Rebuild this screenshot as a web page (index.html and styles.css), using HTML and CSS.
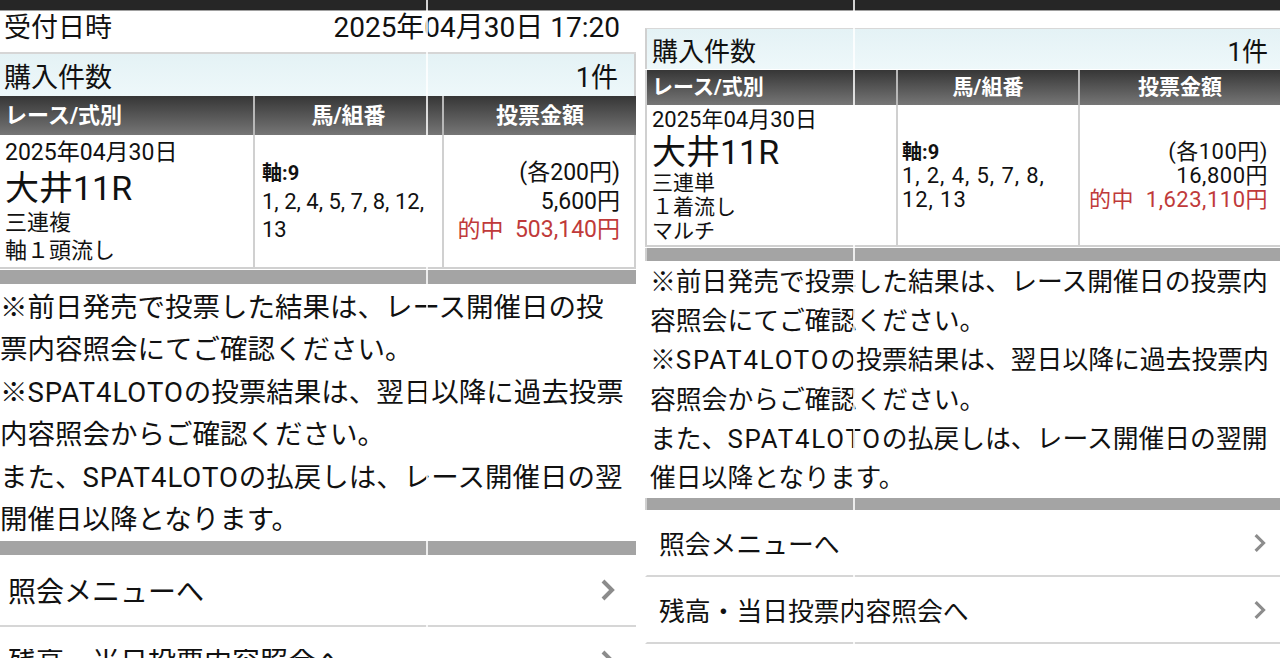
FILE: index.html
```html
<!DOCTYPE html>
<html lang="ja">
<head>
<meta charset="utf-8">
<title>投票内容</title>
<link rel="stylesheet" href="styles.css">
</head>
<body>
<div class="page">
  <div class="topbar"></div>
  <div class="collage">
    <section class="panel left">
      <div class="info"><span>受付日時</span><span>2025年04月30日 17:20</span></div>
      <div class="count"><span>購入件数</span><span>1件</span></div>
      <div class="thead">
        <div class="th c1">レース/式別</div>
        <div class="th c2">馬/組番</div>
        <div class="th c3">投票金額</div>
      </div>
      <div class="tbody">
        <div class="td race">
          <div class="date">2025年04月30日</div>
          <div class="venue">大井11R</div>
          <div class="small">三連複</div>
          <div class="small">軸１頭流し</div>
        </div>
        <div class="td combo">
          <div class="axis">軸:9</div>
          <div>1, 2, 4, 5, 7, 8, 12,</div>
          <div>13</div>
        </div>
        <div class="td amount">
          <div>(各200円)</div>
          <div>5,600円</div>
          <div class="hit">的中&nbsp; 503,140円</div>
        </div>
      </div>
      <div class="graybar"></div>
      <p class="notes">※前日発売で投票した結果は、レース開催日の投<br>票内容照会にてご確認ください。<br>※<span class="lat">SPAT4LOTO</span>の投票結果は、翌日以降に過去投票<br>内容照会からご確認ください。<br>また、<span class="lat">SPAT4LOTO</span>の払戻しは、レース開催日の翌<br>開催日以降となります。</p>
      <div class="graybar gb2"></div>
      <div class="menu"><span>照会メニューへ</span><svg class="chev" viewBox="0 0 16 24" width="16" height="24"><polyline points="3,3 12,12 3,21" fill="none" stroke="#8c8c8c" stroke-width="4"/></svg></div>
      <div class="menu cut"><div class="clip"><span>残高・当日投票内容照会へ</span><svg class="chev" viewBox="0 0 16 24" width="16" height="24"><polyline points="3,3 12,12 3,21" fill="none" stroke="#8c8c8c" stroke-width="4"/></svg></div></div>
    </section>
    <section class="panel right">
      <div class="count r"><span>購入件数</span><span>1件</span></div>
      <div class="thead r">
        <div class="th c1">レース/式別</div>
        <div class="th c2">馬/組番</div>
        <div class="th c3">投票金額</div>
      </div>
      <div class="tbody r">
        <div class="td race">
          <div class="date">2025年04月30日</div>
          <div class="venue">大井11R</div>
          <div class="small">三連単</div>
          <div class="small">１着流し</div>
          <div class="small">マルチ</div>
        </div>
        <div class="td combo">
          <div class="axis">軸:9</div>
          <div>1, 2, 4, 5, 7, 8,</div>
          <div>12, 13</div>
        </div>
        <div class="td amount">
          <div>(各100円)</div>
          <div>16,800円</div>
          <div class="hit">的中&nbsp; 1,623,110円</div>
        </div>
      </div>
      <div class="graybar"></div>
      <p class="notes r">※前日発売で投票した結果は、レース開催日の投票内<br>容照会にてご確認ください。<br>※<span class="lat">SPAT4LOTO</span>の投票結果は、翌日以降に過去投票内<br>容照会からご確認ください。<br>また、<span class="lat">SPAT4LOTO</span>の払戻しは、レース開催日の翌開<br>催日以降となります。</p>
      <div class="graybar gb2"></div>
      <div class="menu r"><span>照会メニューへ</span><svg class="chev" viewBox="0 0 16 24" width="14" height="22"><polyline points="3,3 12,12 3,21" fill="none" stroke="#8c8c8c" stroke-width="3.6"/></svg></div>
      <div class="menu r"><span>残高・当日投票内容照会へ</span><svg class="chev" viewBox="0 0 16 24" width="14" height="22"><polyline points="3,3 12,12 3,21" fill="none" stroke="#8c8c8c" stroke-width="3.6"/></svg></div>
    </section>
  </div>
  <div class="seam seam-l"></div>
  <div class="seam seam-r"></div>
</div>
</body>
</html>
```

FILE: styles.css
```css
html, body {
  margin: 0;
  background: #fff;
}
body {
  width: 1280px;
  height: 670px;
  overflow: hidden;
  font-family: Roboto, "Noto Sans CJK JP", sans-serif;
  color: #111;
}
.page {
  position: relative;
  height: 670px;
}
.topbar {
  height: 10px;
  background: #262626;
  border-bottom: 1px solid #a0a0a0;
}
.collage {
  display: flex;
  gap: 9px;
}
.panel {
  overflow: hidden;
}
.left { width: 636px; }
.right { width: 635px; }

/* info rows */
.info {
  display: flex;
  justify-content: space-between;
  height: 41px;
  line-height: 34px;
  font-size: 27px;
  padding: 0 16px 0 4px;
  border-bottom: 2px solid #d6d6d6;
}
.info span:last-child { font-size: 28px; }
.count {
  display: flex;
  justify-content: space-between;
  align-items: center;
  height: 42px;
  font-size: 27px;
  padding: 0 16px 0 4px;
  background: linear-gradient(#e4f2f5, #eef8fa);
  border-right: 2px solid #d0d0d0;
}
.count.r {
  margin-top: 17px;
  height: 40px;
  font-size: 26px;
  padding: 0 12px 0 5px;
  border-right: none;
  border-left: 2px solid #d0d0d0;
  border-top: 1px solid #d8d8d8;
}

/* table */
.thead, .tbody {
  display: grid;
  grid-template-columns: 253px 187px 1fr;
  column-gap: 2px;
}
.thead {
  height: 39px;
  background: #b8b8b8;
}
.th {
  background: linear-gradient(#363636, #767676);
  color: #fff;
  font-weight: bold;
  font-size: 22px;
  line-height: 39px;
}
.th.c1 { padding-left: 5px; }
.th.c2, .th.c3 { text-align: center; }

.tbody {
  height: 132px;
  background: #d0d0d0;
  border-bottom: 2px solid #d0d0d0;
  border-right: 2px solid #d0d0d0;
}
.td {
  background: #fff;
  white-space: nowrap;
}
.race {
  padding: 4px 0 0 5px;
}
.race .date { font-size: 23px; line-height: 28px; }
.race .venue { font-size: 34px; line-height: 42px; }
.race .small { font-size: 22px; line-height: 28px; }
.combo, .amount {
  display: flex;
  flex-direction: column;
  justify-content: center;
  font-size: 22px;
  line-height: 28.5px;
  padding-top: 2px;
}
.combo { padding-left: 7px; }
.axis { font-weight: bold; font-size: 20px; }
.amount {
  align-items: flex-end;
  padding-right: 14px;
  font-size: 23px;
}
.hit { color: #c03a3a; }

/* right table */
.thead.r, .tbody.r {
  grid-template-columns: 249px 180px 1fr;
  border-left: 2px solid #d0d0d0;
}
.thead.r {
  margin-top: 1px;
  height: 35px;
}
.thead.r .th {
  font-size: 21px;
  line-height: 35px;
}
.tbody.r {
  height: 140px;
  border-right: none;
}
.tbody.r .race { padding-top: 2px; }
.tbody.r .race .date { font-size: 22px; line-height: 26px; }
.tbody.r .race .venue { font-size: 34px; line-height: 38px; }
.tbody.r .race .small { font-size: 21px; line-height: 24px; }
.tbody.r .combo, .tbody.r .amount {
  font-size: 22px;
  line-height: 24px;
  letter-spacing: 0.9px;
}
.tbody.r .combo { padding-left: 4px; }
.tbody.r .axis { font-size: 20px; letter-spacing: 0; }
.tbody.r .amount { padding-right: 12px; letter-spacing: 0.5px; }

.graybar {
  height: 14px;
  background: #a4a4a4;
  margin-top: 1px;
}
.right .graybar { height: 13px; border-left: 2px solid #d0d0d0; }

/* notes */
.notes {
  margin: 0;
  padding: 3px 0 0 0;
  font-size: 27.5px;
  line-height: 42.4px;
  white-space: nowrap;
}
.notes.r {
  padding: 2px 0 0 5px;
  font-size: 25.8px;
  line-height: 39.2px;
}
.lat {
  letter-spacing: 1px;
  line-height: 0;
}
.notes.r .lat { letter-spacing: 1.8px; }
.gb2 { margin-top: 0; }
.right .gb2 { height: 12px; }

/* menu */
.menu {
  display: flex;
  justify-content: space-between;
  align-items: center;
  height: 70px;
  font-size: 28px;
  padding: 0 20px 0 8px;
  border-bottom: 2px solid #d6d6d6;
}
.menu.cut {
  display: block;
  height: 40px;
}
.clip {
  display: flex;
  justify-content: space-between;
  align-items: flex-start;
  margin-top: 22px;
  height: 9px;
  overflow: hidden;
  line-height: 28px;
}
.menu.r {
  height: 65px;
  font-size: 25.8px;
  padding: 0 13px 0 12px;
  border-left: 2px solid #fff;
}
.chev { display: block; }

/* collage stitching seams */
.seam {
  position: absolute;
  top: 0;
  height: 670px;
  width: 2px;
  background: rgba(255, 255, 255, 0.8);
}
.seam-l { left: 426px; }
.seam-r { left: 853px; }
```
